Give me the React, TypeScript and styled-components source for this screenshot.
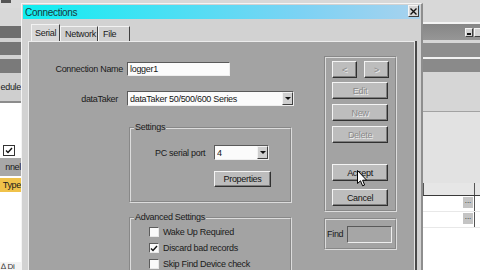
import React from 'react';
import styled, { createGlobalStyle, css } from 'styled-components';

const F = `"Liberation Sans", Arial, sans-serif`;

const txt = css`
  font-family: ${F};
  font-size: 9px;
  letter-spacing: -0.3px;
  color: #1a1a1a;
  white-space: nowrap;
`;

const Global = createGlobalStyle`
  html, body { margin: 0; padding: 0; }
  body { width: 480px; height: 270px; overflow: hidden; background: #d8d8d8; font-family: ${F}; }
`;

const Desktop = styled.div`
  position: relative;
  display: flex;
  width: 480px;
  height: 270px;
  overflow: hidden;
  background: #d8d8d8;
`;

/* ---------- background windows ---------- */
const SideWin = styled.div<{ $w?: number }>`
  display: flex;
  flex-direction: column;
  width: ${(p) => (p.$w ? `${p.$w}px` : 'auto')};
  flex: ${(p) => (p.$w ? 'none' : '1')};
  overflow: hidden;
  background: #d8d8d8;
`;

const Band = styled.div<{ $h?: number; $bg: string; $end?: boolean; $grow?: boolean }>`
  ${txt};
  flex: ${(p) => (p.$grow ? '1' : 'none')};
  height: ${(p) => (p.$h !== undefined ? `${p.$h}px` : 'auto')};
  background: ${(p) => p.$bg};
  display: flex;
  align-items: center;
  justify-content: ${(p) => (p.$end ? 'flex-end' : 'flex-start')};
  overflow: hidden;
`;

const TopMark = styled.div`
  width: 10px;
  height: 3px;
  margin: -5px 0 0 1px;
  background: #555;
`;

const BgCheck = styled.div`
  width: 10px;
  height: 9px;
  margin-left: 3px;
  border: 1px solid #333;
  background: #fff;
  display: flex;
  align-items: center;
  justify-content: center;
`;

const TinyText = styled.span`
  font-size: 8px;
  color: #333;
  padding-left: 1px;
`;

const WinBtns = styled.div`
  display: flex;
  gap: 1px;
  margin-left: auto;
  margin-right: -2px;
`;

const WinBtn = styled.div`
  width: 8px;
  height: 9px;
  background: #d4d4d4;
  border: 1px solid;
  border-color: #f4f4f4 #404040 #404040 #f4f4f4;
  display: flex;
  align-items: flex-end;
  justify-content: center;
  padding-bottom: 1px;
  box-sizing: border-box;
`;

const MinGlyph = styled.div`
  width: 4px;
  height: 2px;
  background: #111;
`;

const GridHeader = styled.div`
  flex: none;
  height: 12px;
  display: flex;
  background: #e6e6e6;
  border-bottom: 1px solid #3a3a3a;
`;

const HeadCell = styled.div<{ $w?: number }>`
  width: ${(p) => (p.$w ? `${p.$w}px` : 'auto')};
  flex: ${(p) => (p.$w ? 'none' : '1')};
  border-left: 1px solid #555;
  height: 100%;
`;

const GridRow = styled.div`
  flex: none;
  height: 15px;
  display: flex;
  background: #fff;
  border-bottom: 1px solid #e8e8e8;
`;

const GridCell = styled.div`
  flex: 1;
`;

const DotsBtn = styled.div`
  width: 10px;
  height: 11px;
  margin: 1px 1px 0 0;
  background: #c4c4c4;
  font-family: ${F};
  font-size: 8px;
  line-height: 8px;
  text-align: center;
  color: #222;
`;

const EndCol = styled.div`
  width: 5px;
  border-left: 1px solid #555;
`;

/* ---------- dialog ---------- */
const Dialog = styled.div`
  flex: none;
  width: 402px;
  margin-top: 3px;
  display: flex;
  flex-direction: column;
  background: #d2d2d2;
  border-left: 1px solid #f4f4f4;
  border-top: 1px solid #f4f4f4;
  border-right: 2px solid #8e8e8e;
  box-sizing: border-box;
  padding: 1px 1px 0 1px;
`;

const TitleBar = styled.div`
  flex: none;
  height: 14px;
  display: flex;
  align-items: center;
  padding: 0 1px 0 2px;
  background: linear-gradient(90deg, #10eef0 0%, #3fe2f4 30%, #7cd2f4 70%, #a8d2ee 100%);
`;

const Title = styled.span`
  ${txt};
  font-size: 10px;
  letter-spacing: -0.3px;
  color: #163a3c;
`;

const CloseBtn = styled.div`
  margin-left: auto;
  width: 11px;
  height: 12px;
  margin-top: -2px;
  box-sizing: border-box;
  background: #d6d6d6;
  border: 1px solid;
  border-color: #f6f6f6 #3c3c3c #3c3c3c #f6f6f6;
  display: flex;
  align-items: center;
  justify-content: center;
`;

const TabStrip = styled.div`
  flex: none;
  height: 22px;
  display: flex;
  align-items: flex-end;
  padding-left: 8px;
`;

const Tab = styled.div<{ $active?: boolean; $w: number }>`
  ${txt};
  width: ${(p) => p.$w}px;
  height: ${(p) => (p.$active ? 17 : 15)}px;
  padding-left: ${(p) => (p.$active ? 3 : 4)}px;
  display: flex;
  align-items: center;
  box-sizing: border-box;
  background: ${(p) => (p.$active ? '#d8d8d8' : '#d0d0d0')};
  border-top: 1px solid #f2f2f2;
  border-left: 1px solid #f2f2f2;
  border-right: 1px solid #404040;
`;

const Panel = styled.div`
  flex: 1;
  margin: 0 5px 0 5px;
  display: flex;
  align-items: flex-start;
  background: #a3a3a3;
  border-top: 1px solid #ececec;
  border-left: 1px solid #ececec;
  border-right: 1px solid #e4e4e4;
  box-shadow: 2px 0 0 #4a4a4a;
`;

const FormCol = styled.div`
  width: 295px;
  flex: none;
  padding-top: 20px;
  display: flex;
  flex-direction: column;
`;

const FormGrid = styled.div`
  display: grid;
  grid-template-columns: 94px auto;
  column-gap: 4px;
  row-gap: 15px;
  align-items: center;
  justify-items: start;
`;

const Label = styled.span<{ $pr?: number }>`
  ${txt};
  justify-self: ${(p) => (p.$pr !== undefined ? 'end' : 'start')};
  padding-right: ${(p) => p.$pr ?? 0}px;
`;

const Sunken = styled.div<{ $w: number; $h: number; $bg?: string }>`
  ${txt};
  color: #161616;
  width: ${(p) => p.$w}px;
  height: ${(p) => p.$h}px;
  box-sizing: border-box;
  background: ${(p) => p.$bg ?? '#fbfbfb'};
  border: 1px solid;
  border-color: #5a5a5a #eeeeee #eeeeee #5a5a5a;
  display: flex;
  align-items: center;
  padding-left: 2px;
  overflow: hidden;
`;

const SelText = styled.span`
  flex: 1;
  overflow: hidden;
`;

const DropBtn = styled.div`
  width: 11px;
  height: 100%;
  flex: none;
  box-sizing: border-box;
  background: #cfcfcf;
  border: 1px solid;
  border-color: #f2f2f2 #404040 #404040 #f2f2f2;
  display: flex;
  align-items: center;
  justify-content: center;
`;

const Arrow = styled.div`
  width: 0;
  height: 0;
  border-left: 3px solid transparent;
  border-right: 3px solid transparent;
  border-top: 3px solid #111;
`;

const Group = styled.fieldset<{ $mt: number; $h?: number }>`
  margin: ${(p) => p.$mt}px 0 0 100px;
  width: 163px;
  height: ${(p) => (p.$h ? `${p.$h}px` : 'auto')};
  box-sizing: border-box;
  padding: 0;
  border: 2px groove #dcdcdc;
  min-width: 0;
`;

const Legend = styled.legend`
  ${txt};
  margin-left: 3px;
  padding: 0 1px;
  line-height: 11px;
`;

const SettingsGrid = styled.div`
  display: grid;
  grid-template-columns: 59px auto;
  padding: 12px 0 0 24px;
  row-gap: 11px;
  align-items: center;
  justify-items: start;
`;

const Btn = styled.div<{ $w?: number; $h?: number; $mt?: number; $off?: boolean }>`
  ${txt};
  width: ${(p) => p.$w ?? 56}px;
  height: ${(p) => p.$h ?? 17}px;
  margin-top: ${(p) => p.$mt ?? 0}px;
  box-sizing: border-box;
  flex: none;
  background: #bdbdbd;
  border: 1px solid;
  border-color: #f4f4f4 #303030 #303030 #f4f4f4;
  box-shadow: inset -1px -1px 0 #7e7e7e;
  display: flex;
  align-items: center;
  justify-content: center;
  color: ${(p) => (p.$off ? '#8a8a8a' : '#141414')};
  text-shadow: ${(p) => (p.$off ? '1px 1px 0 #efefef' : 'none')};
`;

const Checks = styled.div`
  display: flex;
  flex-direction: column;
  padding: 1px 0 0 18px;
`;

const CheckRow = styled.div`
  ${txt};
  height: 16px;
  display: flex;
  align-items: center;
  gap: 4px;
`;

const CheckBox = styled.div`
  width: 10px;
  height: 10px;
  box-sizing: border-box;
  background: #fafafa;
  border: 1px solid;
  border-color: #5c5c5c #e8e8e8 #e8e8e8 #5c5c5c;
  display: flex;
  align-items: center;
  justify-content: center;
`;

const SideCol = styled.div`
  flex: none;
  padding-top: 14px;
  display: flex;
  flex-direction: column;
  gap: 6px;
`;

const BtnGroup = styled.div`
  width: 73px;
  box-sizing: border-box;
  border: 2px groove #dcdcdc;
  padding: 3px 6px 4px 6px;
  display: flex;
  flex-direction: column;
`;

const NavRow = styled.div`
  display: flex;
  justify-content: space-between;
`;

const FindGroup = styled.div`
  ${txt};
  width: 73px;
  height: 32px;
  box-sizing: border-box;
  border: 2px groove #dcdcdc;
  padding: 0 0 0 1px;
  display: flex;
  align-items: center;
  gap: 4px;
`;

const Cursor = styled.svg`
  position: absolute;
  left: 357px;
  top: 170px;
`;

const Tick = () => (
  <svg width="8" height="7" viewBox="0 0 8 7">
    <path d="M1 3.5 L3 5.5 L7 1" fill="none" stroke="#111" strokeWidth="1.4" />
  </svg>
);

export default function App() {
  return (
    <>
      <Global />
      <Desktop>
        <SideWin $w={21}>
          <Band $h={8} $bg="#dadada"><TopMark /></Band>
          <Band $h={18} $bg="#d8d8d8" />
          <Band $h={12} $bg="#6e6e6e" />
          <Band $h={4} $bg="#d2d2d2" />
          <Band $h={13} $bg="#767676" />
          <Band $h={4} $bg="#d2d2d2" />
          <Band $h={14} $bg="#7a7a7a" />
          <Band $h={28} $bg="#cfcfcf" $end>edule</Band>
          <Band $h={2} $bg="#8c8c8c" />
          <Band $h={42} $bg="#ffffff" />
          <Band $h={11} $bg="#ffffff"><BgCheck><Tick /></BgCheck></Band>
          <Band $h={2} $bg="#ffffff" />
          <Band $h={18} $bg="#a8a8a8" $end>nnel</Band>
          <Band $h={2} $bg="#ffffff" />
          <Band $h={14} $bg="#f0c24a" $end>Type</Band>
          <Band $grow $bg="#ffffff" />
          <Band $h={8} $bg="#f4f4f4"><TinyText>∆ Di</TinyText></Band>
        </SideWin>

        <Dialog>
          <TitleBar>
            <Title>Connections</Title>
            <CloseBtn>
              <svg width="7" height="7" viewBox="0 0 7 7">
                <path d="M0.5 0.5 L6.5 6.5 M6.5 0.5 L0.5 6.5" stroke="#111" strokeWidth="1.4" />
              </svg>
            </CloseBtn>
          </TitleBar>
          <TabStrip>
            <Tab $active $w={29}>Serial</Tab>
            <Tab $w={38}>Network</Tab>
            <Tab $w={32}>File</Tab>
          </TabStrip>
          <Panel>
            <FormCol>
              <FormGrid>
                <Label $pr={0}>Connection Name</Label>
                <Sunken $w={103} $h={14}>logger1</Sunken>
                <Label $pr={5}>dataTaker</Label>
                <Sunken $w={167} $h={15}>
                  <SelText>dataTaker 50/500/600 Series</SelText>
                  <DropBtn><Arrow /></DropBtn>
                </Sunken>
              </FormGrid>

              <Group $mt={16} $h={81}>
                <Legend>Settings</Legend>
                <SettingsGrid>
                  <Label>PC serial port</Label>
                  <Sunken $w={55} $h={15}>
                    <SelText>4</SelText>
                    <DropBtn><Arrow /></DropBtn>
                  </Sunken>
                  <span />
                  <Btn $w={57} $h={16}>Properties</Btn>
                </SettingsGrid>
              </Group>

              <Group $mt={9} $h={70}>
                <Legend>Advanced Settings</Legend>
                <Checks>
                  <CheckRow><CheckBox />Wake Up Required</CheckRow>
                  <CheckRow><CheckBox><Tick /></CheckBox>Discard bad records</CheckRow>
                  <CheckRow><CheckBox />Skip Find Device check</CheckRow>
                </Checks>
              </Group>
            </FormCol>

            <SideCol>
              <BtnGroup>
                <NavRow>
                  <Btn $w={25} $off>&lt;</Btn>
                  <Btn $w={25} $off>&gt;</Btn>
                </NavRow>
                <Btn $mt={4} $off>Edit</Btn>
                <Btn $mt={5} $off>New</Btn>
                <Btn $mt={5} $off>Delete</Btn>
                <Btn $mt={21}>Accept</Btn>
                <Btn $mt={8}>Cancel</Btn>
              </BtnGroup>
              <FindGroup>
                Find
                <Sunken $w={45} $h={17} $bg="#a6a6a6" />
              </FindGroup>
            </SideCol>
          </Panel>
        </Dialog>

        <SideWin>
          <Band $h={22} $bg="#d8d8d8" />
          <Band $h={2} $bg="#f4f4f4" />
          <Band $h={16} $bg="linear-gradient(#868686, #969696)">
            <WinBtns>
              <WinBtn><MinGlyph /></WinBtn>
              <WinBtn />
            </WinBtns>
          </Band>
          <Band $h={3} $bg="#d6d6d6" />
          <Band $h={14} $bg="#8e8e8e" />
          <Band $h={2} $bg="#f2f2f2" />
          <Band $h={13} $bg="#8a8a8a" />
          <Band $h={39} $bg="#d6d6d6" />
          <Band $h={1} $bg="#a2a2a2" />
          <Band $h={71} $bg="#e2e2e2" />
          <GridHeader>
            <HeadCell />
            <HeadCell $w={5} />
          </GridHeader>
          <GridRow>
            <GridCell />
            <DotsBtn>...</DotsBtn>
            <EndCol />
          </GridRow>
          <GridRow>
            <GridCell />
            <DotsBtn>...</DotsBtn>
            <EndCol />
          </GridRow>
          <Band $grow $bg="#ffffff" />
        </SideWin>

        <Cursor width="11" height="17" viewBox="0 0 11 17">
          <path d="M0.5 0.5 L0.5 13.5 L3.5 10.8 L5.6 15.8 L7.6 15 L5.6 10.2 L9.6 10.2 Z" fill="#fff" stroke="#000" strokeWidth="1" />
        </Cursor>
      </Desktop>
    </>
  );
}
